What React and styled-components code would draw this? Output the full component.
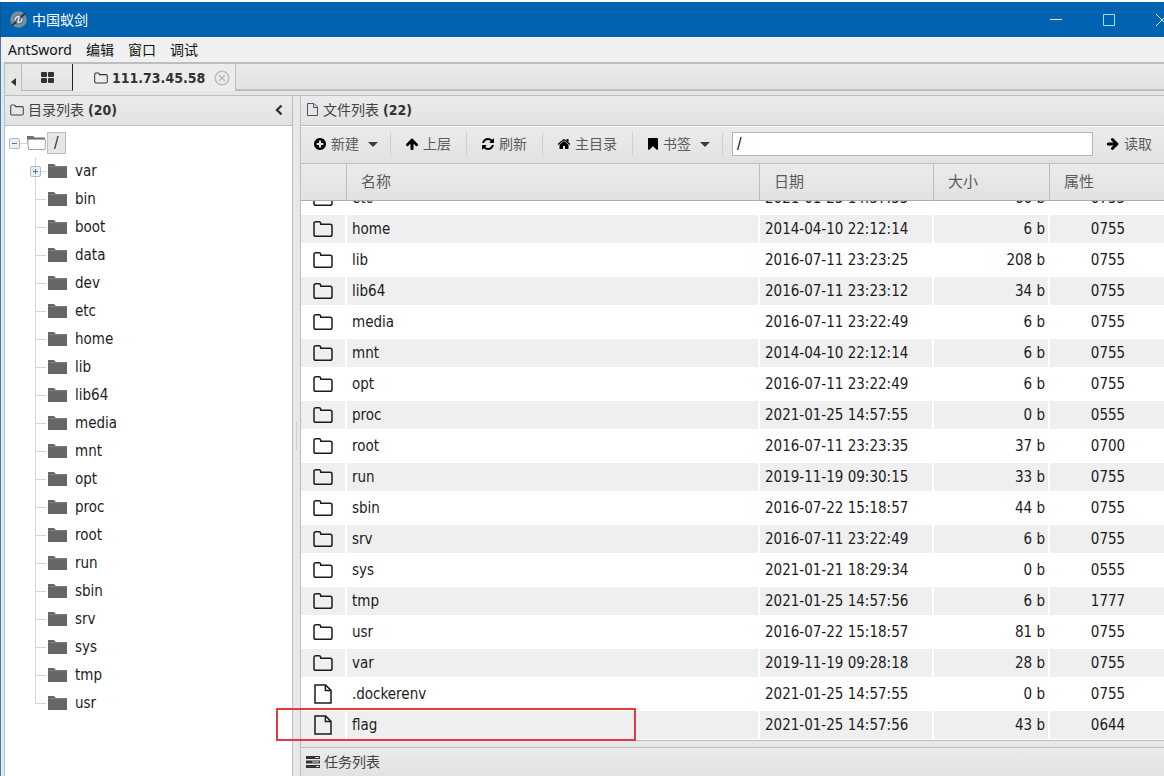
import React, { useLayoutEffect, useRef } from "react";
import styled, { createGlobalStyle } from "styled-components";

const GlobalStyle = createGlobalStyle`
  * { box-sizing: border-box; }
  body {
    margin: 0;
    background: #fff;
    color: #1c1c1c;
    font: 15px/20px "DejaVu Sans Condensed", "Noto Sans", "Noto Sans CJK SC", sans-serif;
  }
  button, input { font: inherit; color: inherit; }
  button { border: 0; padding: 0; background: none; cursor: pointer; }
  svg { display: block; flex: none; }
`;

const line = "#bdbdbd";
const bar = "linear-gradient(#ebebeb, #e2e2e2)";

const Window = styled.div`
  height: 100vh;
  display: flex;
  flex-direction: column;
  overflow: hidden;
  padding-top: 2px;
`;

const TitleBar = styled.header`
  height: 35px;
  flex: none;
  display: flex;
  align-items: center;
  padding-left: 9px;
  gap: 5px;
  background: #0063b1;
  border-left: 1px solid #0b5291;
  color: #fff;
  font-size: 14px;
`;

const Title = styled.h1`
  margin: 0;
  flex: 1;
  font-size: 14px;
  font-weight: 400;
`;

const WindowButtons = styled.div`
  display: flex;
  margin-right: -24px;
`;

const WindowButton = styled.button`
  width: 53px;
  height: 34px;
  display: grid;
  place-items: center;
`;

const Frame = styled.div`
  flex: 1;
  min-height: 0;
  display: flex;
  flex-direction: column;
  border-left: 1px solid #4d7ba8;
  background: #ededed;
`;

const MenuBar = styled.nav`
  height: 25px;
  flex: none;
  display: flex;
  align-items: center;
  gap: 14px;
  padding-left: 7px;
  background: #f0f0f0;
  font-family: "Noto Sans", "Noto Sans CJK SC", sans-serif;
  font-size: 14px;
`;

const MenuItem = styled.button`
  color: #111;
`;

const Content = styled.div`
  flex: 1;
  min-height: 0;
  display: flex;
  flex-direction: column;
  border-left: 3px solid #dce9f5;
`;

const TabBar = styled.div`
  height: 34px;
  flex: none;
  display: flex;
  padding-bottom: 4px;
  background: #e6e6e6;
  border-top: 2px solid ${line};
  border-left: 1px solid ${line};
  border-bottom: 1px solid ${line};
`;

const TabScroll = styled.button`
  width: 17px;
  display: grid;
  place-items: center;
  padding-top: 8px;
  border-right: 1px solid ${line};
  color: #333;
`;

const HomeTab = styled.button`
  width: 51px;
  display: grid;
  place-items: center;
  border-right: 1px solid #222;
  border-bottom: 1px solid ${line};
  background: ${bar};
  color: #333;
`;

const SiteTab = styled.div`
  width: 163px;
  display: flex;
  align-items: center;
  gap: 4px;
  padding-left: 21px;
  border-right: 1px solid ${line};
  background: #ececec;
  color: #333;
  font-size: 14px;
  font-weight: 700;
`;

const CloseTab = styled.button`
  margin-left: 5px;
  color: #bdbdbd;
`;

const TabFill = styled.div`
  flex: 1;
  background: ${bar};
  border-bottom: 2px solid ${line};
`;

const Workspace = styled.div`
  flex: 1;
  min-height: 0;
  display: flex;
`;

const TreePane = styled.aside`
  width: 289px;
  flex: none;
  display: flex;
  flex-direction: column;
  background: #fff;
  border-left: 1px solid ${line};
  border-right: 1px solid ${line};
`;

const PaneHeader = styled.header`
  height: ${(p) => p.$height}px;
  flex: none;
  display: flex;
  align-items: center;
  gap: 4px;
  padding: 0 8px 2px 5px;
  background: ${bar};
  border-bottom: ${(p) => (p.$footer ? 0 : 1)}px solid ${line};
  border-top: ${(p) => (p.$footer ? 1 : 0)}px solid ${line};
  color: #444;
  ${(p) => p.$footer && "padding-bottom: 0;"}
`;

const PaneTitle = styled.h2`
  margin: 0;
  flex: 1;
  font-size: 14px;
  font-weight: 400;
  b { color: #333; }
`;

const Divider = styled.div`
  width: 8px;
  flex: none;
  display: flex;
  align-items: center;
  justify-content: center;
  background: #e8e8e8;
  border-right: 1px solid ${line};
  &::before {
    content: "";
    width: 1px;
    height: 28px;
    background: #cfcfcf;
  }
`;

const Tree = styled.ul`
  list-style: none;
  margin: 0;
  padding: 3px 0 0 4px;
`;

const Branch = styled.ul`
  list-style: none;
  margin: 0;
  padding: 0 0 0 21px;
`;

const TreeRow = styled.div`
  height: 28px;
  display: flex;
  align-items: center;
`;

const Toggle = styled.button`
  width: 11px;
  height: 11px;
  flex: none;
  display: grid;
  place-items: center;
  background: #e9f0f6;
  border: 1px solid #a9bccb;
  border-radius: 2px;
  color: #5b7387;
`;

const Leader = styled.span`
  width: ${(p) => p.$width}px;
  height: 1px;
  flex: none;
  background: #d6d6d6;
`;

const TreeItem = styled.li`
  background: linear-gradient(#d6d6d6, #d6d6d6) 5px 0 / 1px ${(p) => (p.$last ? "14px" : "100%")} no-repeat;
`;

const Indent = styled.span`
  width: ${(p) => p.$width}px;
  flex: none;
`;

const TreeLabel = styled.a`
  margin-left: 8px;
  color: #1c1c1c;
  text-decoration: none;
`;

const RootLabel = styled(TreeLabel)`
  margin-left: 1px;
  padding: 0 6px;
  background: #e6e6e6;
  border: 1px solid ${line};
`;

const FilePane = styled.main`
  flex: 1;
  min-width: 0;
  display: flex;
  flex-direction: column;
  position: relative;
`;

const Toolbar = styled.div`
  height: 38px;
  flex: none;
  display: flex;
  align-items: center;
  padding-bottom: 2px;
  background: ${bar};
  border-top: 1px solid #fafafa;
  border-bottom: 1px solid ${line};
  color: #000;
  font-size: 14px;
`;

const ToolButton = styled.button`
  display: flex;
  align-items: center;
  gap: 4px;
  flex: none;
  padding: 0 ${(p) => (p.$menu ? 12 : 15)}px 0 12px;
  span { color: #5c5c5c; }
`;

const Caret = styled.i`
  margin-left: 5px;
  border: 5px solid transparent;
  border-top-color: #3c3c3c;
  border-bottom: 0;
`;

const Separator = styled.span`
  width: 1px;
  height: 24px;
  flex: none;
  margin-right: 2px;
  background: #c9d3d1;
`;

const PathInput = styled.input`
  flex: 1;
  min-width: 0;
  height: 24px;
  margin: 0 1px 0 7px;
  padding: 0 4px;
  background: #fff;
  border: 1px solid #b4b4b4;
  font-size: 15px;
`;

const Listing = styled.div`
  flex: 1;
  min-height: 0;
  overflow: hidden;
  background: #fff;
`;

const FileTable = styled.table`
  width: 100%;
  table-layout: fixed;
  border-collapse: separate;
  border-spacing: 0;
`;

const HeadCell = styled.th`
  position: sticky;
  top: 0;
  z-index: 1;
  height: 37px;
  width: ${(p) => (p.$width ? `${p.$width}px` : "auto")};
  padding: 0 0 0 14px;
  text-align: left;
  font-weight: 400;
  color: #5c5c5c;
  background: ${bar};
  border-right: 1px solid ${line};
  border-bottom: 1px solid #adadad;
  &:last-child { border-right: 0; }
`;

const Row = styled.tr`
  background: ${(p) => (p.$shaded ? "#efefef" : "#fff")};
`;

const Cell = styled.td`
  height: 31px;
  padding: 0 3px 0 5px;
  text-align: ${(p) => p.$align || "left"};
  border-top: 2px solid #fff;
  border-right: 2px solid #fff;
  border-bottom: 1px solid #fff;
  &:first-child { padding-left: 12px; }
  &:last-child { border-right: 0; }
`;

const Highlight = styled.div`
  position: absolute;
  left: -25px;
  bottom: 35px;
  z-index: 2;
  width: 360px;
  height: 33px;
  border: 2px solid #e23b3f;
  pointer-events: none;
`;

const HorizontalDivider = styled.div`
  height: 7px;
  flex: none;
  background: #e8e8e8;
  border-top: 1px solid ${line};
`;

const shapes = {
  plus: "M1344 960v-128q0-26-19-45t-45-19h-256v-256q0-26-19-45t-45-19h-128q-26 0-45 19t-19 45v256h-256q-26 0-45 19t-19 45v128q0 26 19 45t45 19h256v256q0 26 19 45t45 19h128q26 0 45-19t19-45v-256h256q26 0 45-19t19-45zm320-64q0 209-103 385.5t-279.5 279.5-385.5 103-385.5-103-279.5-279.5-103-385.5 103-385.5 279.5-279.5 385.5-103 385.5 103 279.5 279.5 103 385.5z",
  up: "M1675 971q0 51-37 90l-75 75q-38 38-91 38-54 0-90-38l-294-293v704q0 52-37.5 84.5t-90.5 32.5h-128q-53 0-90.5-32.5t-37.5-84.5v-704l-294 293q-36 38-90 38t-90-38l-75-75q-38-38-38-90 0-53 38-91l651-651q35-37 90-37 54 0 91 37l651 651q37 39 37 91z",
  refresh: "M1639 1056q0 5-1 7-64 268-268 434.5t-478 166.5q-146 0-282.5-55t-243.5-157l-129 129q-19 19-45 19t-45-19-19-45v-448q0-26 19-45t45-19h448q26 0 45 19t19 45-19 45l-137 137q71 66 161 102t187 36q134 0 250-65t186-179q11-17 53-117 8-23 30-23h192q13 0 22.5 9.5t9.5 22.5zm25-800v448q0 26-19 45t-45 19h-448q-26 0-45-19t-19-45 19-45l138-138q-148-137-349-137-134 0-250 65t-186 179q-11 17-53 117-8 23-30 23h-199q-13 0-22.5-9.5t-9.5-22.5v-7q65-268 270-434.5t480-166.5q146 0 284 55.5t245 156.5l130-129q19-19 45-19t45 19 19 45z",
  home: "M1472 992v480q0 26-19 45t-45 19h-384v-384h-256v384h-384q-26 0-45-19t-19-45v-480q0-1 .5-3t.5-3l575-474 575 474q1 2 1 6zm223-69l-62 74q-8 9-21 11h-3q-13 0-21-7l-692-577-692 577q-12 8-24 7-13-2-21-11l-62-74q-8-10-7-23.5t11-21.5l719-599q32-26 76-26t76 26l244 204v-195q0-14 9-23t23-9h192q14 0 23 9t9 23v408l219 182q10 8 11 21.5t-7 23.5z",
  bookmark: "M1420 128q23 0 44 9 33 13 52.5 41t19.5 62v1289q0 34-19.5 62t-52.5 41q-19 8-44 8-48 0-83-32l-441-424-441 424q-36 33-83 33-23 0-44-9-33-13-52.5-41t-19.5-62v-1289q0-34 19.5-62t52.5-41q21-9 44-9h1048z",
};

const Glyph = ({ name, turn = 0, width = 14 }) => (
  <svg width={width} height="14" viewBox={`${(14 - width) * 64} 0 ${width * 128} 1792`} fill="currentColor" aria-hidden="true">
    <path d={shapes[name]} transform={`rotate(${turn} 896 896)`} />
  </svg>
);

const FolderOutline = ({ width = 20, height = 16, stroke = 1.5 }) => (
  <svg width={width} height={height} viewBox="0 0 20 16" fill="none" stroke="currentColor" strokeWidth={stroke} aria-hidden="true">
    <path d="M1 2.6Q1 .8 2.8 .8H6Q7.7 .8 7.7 2.6V3.2H17.2Q19 3.2 19 5V13.4Q19 15.2 17.2 15.2H2.8Q1 15.2 1 13.4Z" />
  </svg>
);

const FileOutline = ({ width = 20, height = 20, stroke = 1.5 }) => (
  <svg width={width} height={height} viewBox="0 0 20 20" fill="none" stroke="currentColor" strokeWidth={stroke} aria-hidden="true">
    <path d="M2 1H12.6L18 6.4V19H2ZM12.4 1V6.6H18" />
  </svg>
);

const SmallFile = () => (
  <svg width="13" height="15" viewBox="0 0 13 15" fill="none" stroke="#4a5266" aria-hidden="true">
    <path d="M1.5 1.5H8L11.5 5V13.5H1.5ZM7.5 1.5V5.5H11.5" />
  </svg>
);

const FolderSolid = () => (
  <svg width="19" height="16" viewBox="0 0 19 16" aria-hidden="true">
    <path d="M0 1H6L8 3H19V15H0Z" fill="#666" />
    <path d="M0 3.5H19" stroke="#7d7d7d" />
  </svg>
);

const FolderOpen = () => (
  <svg width="19" height="16" viewBox="0 0 19 16" aria-hidden="true">
    <path d="M0 1H6L8 2.5H18V6H1V10L0 5Z" fill="#707070" />
    <path d="M.8 4.5H18.5L18 14.5H1.5Z" fill="#fff" stroke="#a5a5a5" />
  </svg>
);

const Logo = () => (
  <svg width="17" height="17" viewBox="0 0 17 17" aria-hidden="true">
    <circle cx="8.5" cy="8.5" r="8.2" fill="#7d8f99" />
    <circle cx="8.5" cy="8.5" r="5.2" fill="#66798a" />
    <path d="M2.5 14 6 11M11 6 15 2.5" stroke="#24323c" strokeWidth="1.8" />
    <path d="M5 9.5Q5 5.5 9 5.5L8 11.5Q12 11.5 12 7.5" fill="none" stroke="#dfe8ec" strokeWidth="1.3" />
  </svg>
);

const Tasks = () => (
  <svg width="14" height="12" viewBox="0 0 14 12" aria-hidden="true">
    <path d="M0 0H14V3H0ZM0 4.5H14V7.5H0ZM0 9H14V12H0Z" fill="#333" />
    <path d="M9 1.5H13M6 6H13M10 10.5H13" stroke="#ddd" />
  </svg>
);

const folders = [
  "var", "bin", "boot", "data", "dev", "etc", "home", "lib", "lib64", "media",
  "mnt", "opt", "proc", "root", "run", "sbin", "srv", "sys", "tmp", "usr",
];

const entries = [
  ["etc", "2021-01-25 14:57:55", "66 b", "0755"],
  ["home", "2014-04-10 22:12:14", "6 b", "0755"],
  ["lib", "2016-07-11 23:23:25", "208 b", "0755"],
  ["lib64", "2016-07-11 23:23:12", "34 b", "0755"],
  ["media", "2016-07-11 23:22:49", "6 b", "0755"],
  ["mnt", "2014-04-10 22:12:14", "6 b", "0755"],
  ["opt", "2016-07-11 23:22:49", "6 b", "0755"],
  ["proc", "2021-01-25 14:57:55", "0 b", "0555"],
  ["root", "2016-07-11 23:23:35", "37 b", "0700"],
  ["run", "2019-11-19 09:30:15", "33 b", "0755"],
  ["sbin", "2016-07-22 15:18:57", "44 b", "0755"],
  ["srv", "2016-07-11 23:22:49", "6 b", "0755"],
  ["sys", "2021-01-21 18:29:34", "0 b", "0555"],
  ["tmp", "2021-01-25 14:57:56", "6 b", "1777"],
  ["usr", "2016-07-22 15:18:57", "81 b", "0755"],
  ["var", "2019-11-19 09:28:18", "28 b", "0755"],
  [".dockerenv", "2021-01-25 14:57:55", "0 b", "0755", "file"],
  ["flag", "2021-01-25 14:57:56", "43 b", "0644", "file"],
];

function DirectoryTree() {
  return (
    <TreePane>
      <PaneHeader $height={30}>
        <FolderOutline width={14} height={12} />
        <PaneTitle>目录列表 <b>(20)</b></PaneTitle>
        <button aria-label="Collapse">
          <svg width="10" height="12" viewBox="0 0 10 12" fill="none" stroke="#333" strokeWidth="2.4">
            <path d="M7.5 1.5 3 6l4.5 4.5" />
          </svg>
        </button>
      </PaneHeader>
      <Tree>
        <li>
          <TreeRow>
            <Toggle aria-label="Collapse /">
              <svg width="7" height="7" stroke="currentColor"><path d="M1 3.5h5" /></svg>
            </Toggle>
            <Leader $width={7} />
            <FolderOpen />
            <RootLabel href="#root">/</RootLabel>
          </TreeRow>
          <Branch>
            {folders.map((name, i) => (
              <TreeItem key={name} $last={i === folders.length - 1}>
                <TreeRow>
                  {i === 0 ? (
                    <Toggle aria-label="Expand var">
                      <svg width="7" height="7" stroke="currentColor"><path d="M1 3.5h5M3.5 1v5" /></svg>
                    </Toggle>
                  ) : (
                    <Indent $width={5} />
                  )}
                  <Leader $width={i === 0 ? 5 : 11} />
                  <Indent $width={2} />
                  <FolderSolid />
                  <TreeLabel href={`#${name}`}>{name}</TreeLabel>
                </TreeRow>
              </TreeItem>
            ))}
          </Branch>
        </li>
      </Tree>
    </TreePane>
  );
}

function FileToolbar() {
  return (
    <Toolbar>
      <ToolButton $menu><Glyph name="plus" /><span>新建</span><Caret /></ToolButton>
      <Separator />
      <ToolButton><Glyph name="up" /><span>上层</span></ToolButton>
      <Separator />
      <ToolButton><Glyph name="refresh" /><span>刷新</span></ToolButton>
      <Separator />
      <ToolButton><Glyph name="home" /><span>主目录</span></ToolButton>
      <Separator />
      <ToolButton $menu><Glyph name="bookmark" width={12} /><span>书签</span><Caret /></ToolButton>
      <Separator />
      <PathInput aria-label="Path" defaultValue="/" />
      <ToolButton $menu><Glyph name="up" turn={90} /><span>读取</span></ToolButton>
    </Toolbar>
  );
}

function FileListing() {
  const ref = useRef(null);
  useLayoutEffect(() => {
    ref.current.scrollTop = ref.current.scrollHeight;
  }, []);
  return (
    <Listing ref={ref}>
      <FileTable>
        <thead>
          <tr>
            <HeadCell $width={46} aria-label="Type" />
            <HeadCell>名称</HeadCell>
            <HeadCell $width={174}>日期</HeadCell>
            <HeadCell $width={116}>大小</HeadCell>
            <HeadCell $width={114}>属性</HeadCell>
          </tr>
        </thead>
        <tbody>
          {entries.map(([name, date, size, mode, kind], i) => (
            <Row key={name} $shaded={i % 2 === 1}>
              <Cell>{kind === "file" ? <FileOutline /> : <FolderOutline />}</Cell>
              <Cell>{name}</Cell>
              <Cell>{date}</Cell>
              <Cell $align="right">{size}</Cell>
              <Cell $align="center">{mode}</Cell>
            </Row>
          ))}
        </tbody>
      </FileTable>
    </Listing>
  );
}

export default function App() {
  return (
    <>
      <GlobalStyle />
      <Window>
        <TitleBar>
          <Logo />
          <Title>中国蚁剑</Title>
          <WindowButtons>
            <WindowButton aria-label="Minimize">
              <svg width="12" height="12" stroke="#d8f0ff"><path d="M0 5.5h12" /></svg>
            </WindowButton>
            <WindowButton aria-label="Maximize">
              <svg width="12" height="12" stroke="#a9dcff" fill="none"><path d="M.5.5h11v11H.5z" /></svg>
            </WindowButton>
            <WindowButton aria-label="Close">
              <svg width="12" height="12" stroke="#d8f0ff"><path d="m0 0 12 12M12 0 0 12" /></svg>
            </WindowButton>
          </WindowButtons>
        </TitleBar>
        <Frame>
          <MenuBar>
            <MenuItem>AntSword</MenuItem>
            <MenuItem>编辑</MenuItem>
            <MenuItem>窗口</MenuItem>
            <MenuItem>调试</MenuItem>
          </MenuBar>
          <Content>
            <TabBar>
              <TabScroll aria-label="Scroll tabs left">
                <svg width="5" height="8" fill="currentColor"><path d="M5 0v8L0 4z" /></svg>
              </TabScroll>
              <HomeTab aria-label="Home">
                <svg width="13" height="11" fill="currentColor">
                  <rect width="6" height="5" rx="1" /><rect x="7" width="6" height="5" rx="1" />
                  <rect y="6" width="6" height="5" rx="1" /><rect x="7" y="6" width="6" height="5" rx="1" />
                </svg>
              </HomeTab>
              <SiteTab>
                <FolderOutline width={14} height={12} />
                111.73.45.58
                <CloseTab aria-label="Close tab">
                  <svg width="16" height="16" viewBox="0 0 16 16" fill="none" stroke="currentColor" strokeWidth="1.5">
                    <circle cx="8" cy="8" r="6.8" /><path d="m5 5 6 6M11 5l-6 6" />
                  </svg>
                </CloseTab>
              </SiteTab>
              <TabFill />
            </TabBar>
            <Workspace>
              <DirectoryTree />
              <Divider />
              <FilePane>
                <PaneHeader $height={30}>
                  <SmallFile />
                  <PaneTitle>文件列表 <b>(22)</b></PaneTitle>
                </PaneHeader>
                <FileToolbar />
                <FileListing />
                <HorizontalDivider />
                <PaneHeader $height={29} $footer>
                  <Tasks />
                  <PaneTitle>任务列表</PaneTitle>
                </PaneHeader>
                <Highlight />
              </FilePane>
            </Workspace>
          </Content>
        </Frame>
      </Window>
    </>
  );
}
